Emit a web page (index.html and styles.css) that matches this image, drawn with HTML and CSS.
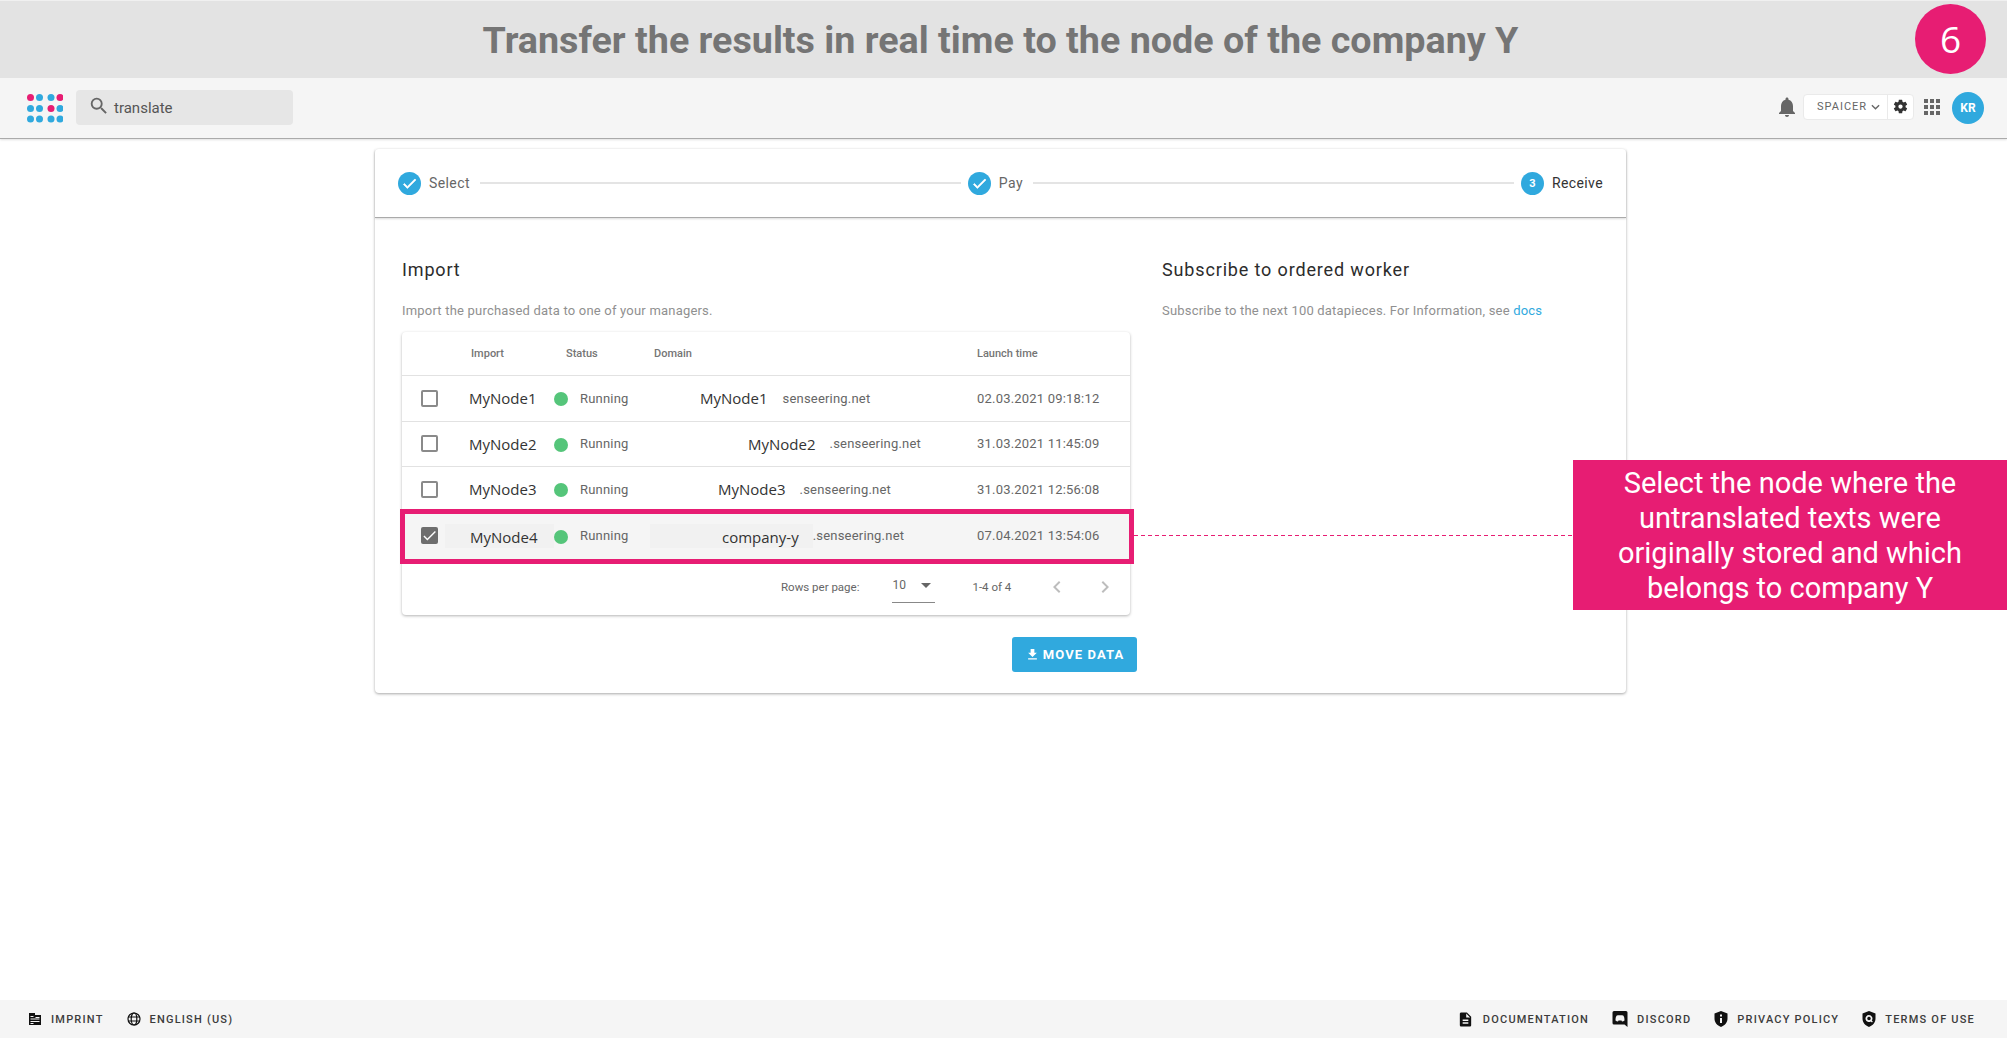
FILE: index.html
```html
<!DOCTYPE html>
<html>
<head>
  <title>Transfer the results</title>
  <link rel="stylesheet" href="styles.css">
</head>
<body>
<div class="page">
  <header class="title-bar">
    <h1>Transfer the results in real time to the node of the company Y</h1>
    <div class="step-badge">6</div>
  </header>

  <nav class="toolbar">
    <svg class="logo" viewBox="0 0 36 29" width="36" height="29">
      <circle class="pink" cx="3.500" cy="3.500" r="3.500"/><circle class="blue" cx="12.500" cy="3.500" r="3.500"/><circle class="blue" cx="24" cy="3.500" r="3.500"/><circle class="pink" cx="33" cy="3.500" r="3.500"/>
      <circle class="blue" cx="3.500" cy="14.500" r="3.500"/><circle class="blue" cx="12.500" cy="14.500" r="3.500"/><circle class="pink" cx="24" cy="14.500" r="3.500"/><circle class="blue" cx="33" cy="14.500" r="3.500"/>
      <circle class="blue" cx="3.500" cy="25" r="3.500"/><circle class="blue" cx="12.500" cy="25" r="3.500"/><circle class="blue" cx="24" cy="25" r="3.500"/><circle class="blue" cx="33" cy="25" r="3.500"/>
    </svg>
    <div class="search">
      <svg viewBox="0 0 24 24" width="22" height="22"><path d="M15.5 14h-.79l-.28-.27A6.471 6.471 0 0 0 16 9.5 6.5 6.5 0 1 0 9.5 16c1.61 0 3.09-.59 4.23-1.57l.27.28v.79l5 4.99L20.49 19l-4.99-5zm-6 0C7.01 14 5 11.99 5 9.5S7.01 5 9.5 5 14 7.01 14 9.5 11.99 14 9.5 14z"/></svg>
      <span>translate</span>
    </div>
    <div class="spacer"></div>
    <svg class="bell" viewBox="0 0 24 24" width="24" height="24"><path d="M12 22c1.1 0 2-.9 2-2h-4c0 1.1.89 2 2 2zm6-6v-5c0-3.07-1.64-5.64-4.5-6.32V4c0-.83-.67-1.5-1.5-1.5s-1.5.67-1.5 1.5v.68C7.63 5.36 6 7.92 6 11v5l-2 2v1h16v-1l-2-2z"/></svg>
    <div class="org">
      <div class="org-name">SPAICER
        <svg viewBox="0 0 10 6" width="9" height="6"><path d="M1 1l4 4 4-4" fill="none" stroke="#666" stroke-width="1.5"/></svg>
      </div>
      <div class="org-gear">
        <svg viewBox="0 0 24 24" width="17" height="17"><path d="M19.14 12.94c.04-.3.06-.61.06-.94 0-.32-.02-.64-.07-.94l2.03-1.58a.49.49 0 0 0 .12-.61l-1.92-3.32a.488.488 0 0 0-.59-.22l-2.39.96c-.5-.38-1.03-.7-1.62-.94l-.36-2.54a.484.484 0 0 0-.48-.41h-3.84c-.24 0-.43.17-.47.41l-.36 2.54c-.59.24-1.13.57-1.62.94l-2.39-.96c-.22-.08-.47 0-.59.22L2.74 8.87c-.12.21-.08.47.12.61l2.03 1.58c-.05.3-.09.63-.09.94s.02.64.07.94l-2.03 1.58a.49.49 0 0 0-.12.61l1.92 3.32c.12.22.37.29.59.22l2.39-.96c.5.38 1.03.7 1.62.94l.36 2.54c.05.24.24.41.48.41h3.84c.24 0 .44-.17.47-.41l.36-2.54c.59-.24 1.13-.56 1.62-.94l2.39.96c.22.08.47 0 .59-.22l1.92-3.32c.12-.22.07-.47-.12-.61l-2.01-1.58zM12 15c-1.65 0-3-1.35-3-3s1.35-3 3-3 3 1.35 3 3-1.35 3-3 3z"/></svg>
      </div>
    </div>
    <div class="apps">
      <i></i><i></i><i></i><i></i><i></i><i></i><i></i><i></i><i></i>
    </div>
    <div class="avatar">KR</div>
  </nav>

  <main class="content">
    <section class="card">
      <div class="stepper">
        <div class="step">
          <span class="step-dot"><svg viewBox="0 0 24 24" width="17" height="17"><path d="M9 16.17 4.83 12l-1.42 1.41L9 19 21 7l-1.41-1.41z"/></svg></span>
          <span class="step-label">Select</span>
        </div>
        <div class="step-line"></div>
        <div class="step">
          <span class="step-dot"><svg viewBox="0 0 24 24" width="17" height="17"><path d="M9 16.17 4.83 12l-1.42 1.41L9 19 21 7l-1.41-1.41z"/></svg></span>
          <span class="step-label">Pay</span>
        </div>
        <div class="step-line"></div>
        <div class="step">
          <span class="step-dot">3</span>
          <span class="step-label active">Receive</span>
        </div>
      </div>

      <div class="card-body">
        <div class="col-left">
          <h2>Import</h2>
          <p class="hint">Import the purchased data to one of your managers.</p>

          <div class="table">
            <div class="table-head">
              <span>Import</span>
              <span>Status</span>
              <span>Domain</span>
              <span>Launch time</span>
            </div>

            <div class="table-row">
              <span class="checkbox"></span>
              <span class="node">MyNode1</span>
              <span class="status"><i class="dot"></i>Running</span>
              <span class="domain"><b class="node d1">MyNode1</b><em class="e1">senseering.net</em></span>
              <span class="time">02.03.2021 09:18:12</span>
            </div>
            <div class="table-row">
              <span class="checkbox"></span>
              <span class="node">MyNode2</span>
              <span class="status"><i class="dot"></i>Running</span>
              <span class="domain"><b class="node d2">MyNode2</b><em class="e2">.senseering.net</em></span>
              <span class="time">31.03.2021 11:45:09</span>
            </div>
            <div class="table-row">
              <span class="checkbox"></span>
              <span class="node">MyNode3</span>
              <span class="status"><i class="dot"></i>Running</span>
              <span class="domain"><b class="node d3">MyNode3</b><em class="e3">.senseering.net</em></span>
              <span class="time">31.03.2021 12:56:08</span>
            </div>
            <div class="table-row selected">
              <span class="checkbox checked"><svg viewBox="0 0 24 24" width="17" height="17"><path d="M9 16.17 4.83 12l-1.42 1.41L9 19 21 7l-1.41-1.41z"/></svg></span>
              <span class="node patch patch-left">MyNode4</span>
              <span class="status"><i class="dot"></i>Running</span>
              <span class="domain"><b class="node patch patch-domain">company-y</b><em>.senseering.net</em></span>
              <span class="time">07.04.2021 13:54:06</span>
              <span class="highlight"></span>
            </div>

            <div class="table-foot">
              <span class="rows-label">Rows per page:</span>
              <span class="rows-select">10<i class="caret"></i></span>
              <span class="range">1-4 of 4</span>
              <svg class="pager" viewBox="0 0 24 24" width="24" height="24"><path d="M15.4 7.4 14 6l-6 6 6 6 1.4-1.4L10.8 12z"/></svg>
              <svg class="pager" viewBox="0 0 24 24" width="24" height="24"><path d="M8.6 16.6 10 18l6-6-6-6-1.4 1.4 4.6 4.6z"/></svg>
            </div>
          </div>

          <div class="actions">
            <button class="move-btn">
              <svg viewBox="0 0 24 24" width="15" height="15"><path d="M19 9h-4V3H9v6H5l7 7 7-7zM5 18v2h14v-2H5z"/></svg>
              MOVE DATA
            </button>
          </div>
        </div>

        <div class="col-right">
          <h2>Subscribe to ordered worker</h2>
          <p class="hint">Subscribe to the next 100 datapieces. For Information, see <a href="#">docs</a></p>
        </div>
      </div>
    </section>
  </main>

  <footer class="footer">
    <a class="foot-link">
      <svg viewBox="0 0 14 14" width="14" height="14"><path d="M1 1h6v2h6v10H1zM2.500 4v1h3V4zm0 2.500v1h9v-1zm0 2.500v1h9V9zm0 2v1h3v-1zm5-6v1h4V5z" fill-rule="evenodd"/></svg>
      IMPRINT
    </a>
    <a class="foot-link">
      <svg viewBox="0 0 14 14" width="14" height="14"><g fill="none" stroke="#111" stroke-width="1.2"><circle cx="7" cy="7" r="6"/><ellipse cx="7" cy="7" rx="2.800" ry="6"/><path d="M1.200 5h11.600M1.200 9h11.600"/></g></svg>
      ENGLISH (US)
    </a>
    <div class="spacer"></div>
    <a class="foot-link">
      <svg viewBox="0 0 24 24" width="17" height="17"><path d="M14 2H6c-1.100 0-2 .9-2 2v16c0 1.100.89 2 2 2h12c1.100 0 2-.9 2-2V8l-6-6zm2 16H8v-2h8v2zm0-4H8v-2h8v2zm-3-5V3.500L18.500 9H13z"/></svg>
      DOCUMENTATION
    </a>
    <a class="foot-link">
      <svg viewBox="0 0 16 16" width="16" height="16"><path d="M2 0h12a1.500 1.500 0 0 1 1.500 1.500V16l-3-2.500H2A1.500 1.500 0 0 1 .5 12V1.500A1.500 1.500 0 0 1 2 0zm3 4.500C4 5 3.500 7 3.500 9.500c1 .8 2 1 2.500.9l.5-.8h3l.5.8c.5.1 1.500-.1 2.500-.9 0-2.500-.5-4.500-1.500-5-1-.4-1.500-.4-2-.3H7c-.5-.1-1-.1-2 .3z" fill-rule="evenodd"/></svg>
      DISCORD
    </a>
    <a class="foot-link">
      <svg viewBox="0 0 14 16" width="14" height="16"><path d="M7 0l6.500 2.500v5c0 4-2.700 7-6.500 8.500C3.200 14.500.5 11.500.5 7.500v-5zM6 3.500v2h2v-2zm0 3.500v5h2V7z" fill-rule="evenodd"/></svg>
      PRIVACY POLICY
    </a>
    <a class="foot-link">
      <svg viewBox="0 0 14 16" width="14" height="16"><path d="M7 0l6.500 2.500v5c0 4-2.700 7-6.500 8.500C3.200 14.500.5 11.500.5 7.500v-5zM7 4a3.500 3.500 0 1 0 1.800 6.500l1.200 1 .8-1-1-1A3.500 3.500 0 0 0 7 4zm0 1.700a1.800 1.800 0 1 1 0 3.600 1.800 1.800 0 0 1 0-3.600z" fill-rule="evenodd"/></svg>
      TERMS OF USE
    </a>
  </footer>

  <div class="leader"></div>
  <div class="callout">Select the node where the untranslated texts were originally stored and which belongs to company Y</div>
</div>
</body>
</html>
```

FILE: styles.css
```css
* {
  box-sizing: border-box;
}

body {
  margin: 0;
  font-family: Roboto, Arial, sans-serif;
  background-color: #fff;
  color: #333;
}

.page {
  position: relative;
  display: flex;
  flex-direction: column;
  height: 1039px;
  overflow: hidden;
}

.spacer {
  flex: 1;
}

/* top banner */
.title-bar {
  position: relative;
  display: flex;
  align-items: center;
  justify-content: center;
  height: 78px;
  border-top: 1px solid #f0f0f0;
  background-color: #e3e3e3;
}

.title-bar h1 {
  margin: 1px 6px 0 0;
  font-size: 37.700px;
  font-weight: 700;
  color: #757575;
}

.step-badge {
  position: absolute;
  top: 3px;
  left: 1915px;
  width: 71px;
  height: 70px;
  border-radius: 50%;
  background-color: #e71d73;
  color: #fff;
  font-family: "Open Sans", sans-serif;
  font-size: 37px;
  line-height: 70px;
  text-align: center;
}

/* toolbar */
.toolbar {
  display: flex;
  align-items: center;
  height: 61px;
  padding: 0 23px 0 27px;
  background-color: #f5f5f5;
  border-bottom: 1px solid #aaa;
  box-shadow: 0 1px 2px rgba(0, 0, 0, 0.12);
}

.logo .pink {
  fill: #e71d73;
}

.logo .blue {
  fill: #30a9de;
}

.search {
  display: flex;
  align-items: center;
  width: 217px;
  height: 35px;
  margin: -1px 0 0 13px;
  padding-left: 12px;
  background-color: #e6e6e6;
  border-radius: 4px;
  font-size: 15px;
  color: #555;
}

.search svg {
  fill: #666;
  margin-right: 4px;
  margin-top: -3px;
}

.search span {
  margin-top: 1px;
}

.bell {
  fill: #666;
  margin-top: -2px;
}

.org {
  display: flex;
  align-items: stretch;
  width: 111px;
  height: 26px;
  margin: -3px 0 0 4px;
  background-color: #fff;
  border: 1px solid #eaeaea;
  border-radius: 4px;
}

.org-name {
  display: flex;
  align-items: center;
  gap: 4px;
  width: 84px;
  padding-left: 13px;
  border-right: 1px solid #eaeaea;
  font-size: 11px;
  letter-spacing: 1px;
  color: #666;
}

.org-gear {
  display: flex;
  align-items: center;
  justify-content: center;
  flex: 1;
}

.org-gear svg {
  fill: #333;
}

.apps {
  display: grid;
  grid-template-columns: repeat(3, 4px);
  grid-auto-rows: 4px;
  gap: 2px;
  margin: -2px 0 0 10px;
}

.apps i {
  background-color: #666;
}

.avatar {
  width: 32px;
  height: 32px;
  margin: -1px 0 0 12px;
  border-radius: 50%;
  background-color: #30a9de;
  color: #fff;
  font-size: 12px;
  font-weight: 700;
  line-height: 32px;
  text-align: center;
}

/* card */
.content {
  flex: 1;
  padding: 10px 0 0 375px;
}

.card {
  width: 1251px;
  height: 544px;
  background-color: #fff;
  border-radius: 4px;
  box-shadow: 0 1px 3px rgba(0, 0, 0, 0.35);
}

.stepper {
  display: flex;
  align-items: center;
  height: 69px;
  padding: 0 23px;
  border-bottom: 1px solid #aaa;
  box-shadow: 0 1px 2px rgba(0, 0, 0, 0.15);
}

.step {
  display: flex;
  align-items: center;
  gap: 8px;
}

.step-dot {
  display: flex;
  align-items: center;
  justify-content: center;
  width: 23px;
  height: 23px;
  border-radius: 50%;
  background-color: #30a9de;
  color: #fff;
  font-size: 11px;
  font-weight: 700;
}

.step-dot svg {
  fill: #fff;
  stroke: #fff;
  stroke-width: 1;
}

.step-label {
  font-size: 14px;
  letter-spacing: 0.4px;
  color: #666;
}

.step-label.active {
  color: #333;
}

.step-line {
  flex: 1;
  height: 2px;
  margin: 0 7px 0 10px;
  background-color: #e4e4e4;
}

.card-body {
  display: flex;
  padding: 41px 0 0 27px;
}

.col-left {
  width: 728px;
  margin-right: 32px;
}

.card-body h2 {
  margin: 0;
  font-size: 18px;
  font-weight: 400;
  letter-spacing: 0.85px;
  line-height: 22px;
  color: #2c2c2c;
}

.hint {
  margin: 21px 0 0;
  font-size: 13px;
  letter-spacing: 0.2px;
  line-height: 18px;
  color: #909090;
}

.hint a {
  color: #30a9de;
  text-decoration: none;
}

/* table */
.table {
  margin-top: 12px;
  border-radius: 4px;
  box-shadow: 0 1px 3px rgba(0, 0, 0, 0.3);
}

.table-head {
  display: grid;
  grid-template-columns: 95px 88px 323px 1fr;
  align-items: center;
  height: 44px;
  padding-left: 69px;
  border-bottom: 1px solid #e2e2e2;
  font-size: 11px;
  font-weight: 500;
  color: #757575;
}

.table-row {
  position: relative;
  display: grid;
  grid-template-columns: 67px 85px 100px 323px 1fr;
  align-items: center;
  height: 45.500px;
  border-bottom: 1px solid #e2e2e2;
  font-size: 13px;
  letter-spacing: 0.2px;
  color: #666;
}

.table-row.selected {
  height: 46px;
  border-bottom: none;
  background-color: #f5f5f5;
}

.checkbox {
  display: flex;
  width: 17px;
  height: 17px;
  margin-left: 19px;
  border: 2px solid #8a8a8a;
  border-radius: 2px;
}

.checkbox.checked {
  border: none;
  background-color: #6e6e6e;
}

.checkbox svg {
  fill: #fff;
}

.node {
  font-family: "Open Sans", sans-serif;
  font-size: 15px;
  font-weight: 400;
  letter-spacing: 0;
  color: #333;
}

.patch {
  padding-top: 3px;
  padding-bottom: 1px;
  background-color: #f1f1f1;
}

.patch-left {
  margin-left: -24px;
  padding-left: 25px;
}

.patch-domain {
  margin-left: -4px;
  padding-left: 72px;
  padding-right: 14px;
}

.status {
  display: flex;
  align-items: center;
}

.dot {
  width: 14px;
  height: 14px;
  margin: 2px 12px 0 0;
  border-radius: 50%;
  background-color: #55c57a;
}

.domain {
  display: flex;
  align-items: center;
}

.domain em {
  font-style: normal;
}

.d1 { margin-left: 46px; }
.d2 { margin-left: 94px; }
.d3 { margin-left: 64px; }
.e1 { margin-left: 15px; }
.e2 { margin-left: 14px; }
.e3 { margin-left: 14px; }

.highlight {
  position: absolute;
  top: -4px;
  left: -2px;
  right: -4px;
  bottom: -5px;
  border: 5px solid #e71d73;
}

.table-foot {
  display: flex;
  align-items: center;
  height: 56px;
  padding-left: 379px;
  font-size: 11.500px;
  white-space: nowrap;
  color: #666;
}

.rows-select {
  display: flex;
  flex-shrink: 0;
  align-items: center;
  width: 43px;
  height: 34px;
  margin: -2px 0 0 33px;
  border-bottom: 1px solid #888;
  font-size: 12px;
}

.caret {
  margin-left: 15px;
  border-top: 5px solid #666;
  border-left: 5px solid transparent;
  border-right: 5px solid transparent;
}

.range {
  margin-left: 37px;
  margin-right: 34px;
}

.pager {
  flex-shrink: 0;
  fill: #bdbdbd;
  margin-right: 24px;
}

.actions {
  display: flex;
  justify-content: flex-end;
  margin: 22px -7px 0 0;
}

.move-btn {
  display: flex;
  align-items: center;
  justify-content: center;
  gap: 3px;
  width: 125px;
  height: 35px;
  border: none;
  border-radius: 3px;
  background-color: #30a9de;
  color: #fff;
  font-family: Roboto, Arial, sans-serif;
  font-size: 13px;
  font-weight: 700;
  letter-spacing: 1.100px;
}

.move-btn svg {
  fill: #fff;
}

/* footer */
.footer {
  display: flex;
  align-items: center;
  gap: 23px;
  height: 38px;
  margin-bottom: 1px;
  padding: 0 32px 0 28px;
  background-color: #f5f5f5;
}

.foot-link {
  display: flex;
  align-items: center;
  gap: 9px;
  font-size: 11px;
  font-weight: 500;
  letter-spacing: 1.200px;
  color: #3c3c3c;
}

.foot-link svg {
  fill: #111;
}

/* annotation */
.leader {
  position: absolute;
  top: 535px;
  left: 1134px;
  width: 439px;
  height: 1px;
  background: repeating-linear-gradient(90deg, #e71d73 0, #e71d73 4px, transparent 4px, transparent 7px);
}

.callout {
  position: absolute;
  top: 460px;
  left: 1573px;
  width: 434px;
  height: 150px;
  padding: 6px 30px;
  background-color: #e71d73;
  color: #fff;
  font-size: 29px;
  line-height: 35px;
  text-align: center;
}
```
